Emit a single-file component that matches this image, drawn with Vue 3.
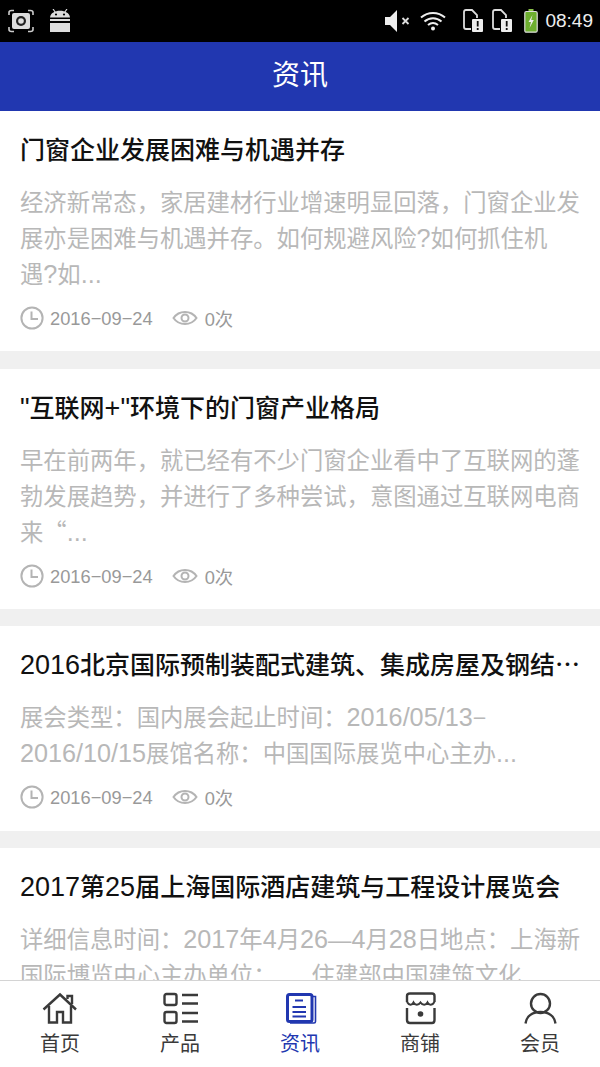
<template>
  <div class="page">
    <div class="status">
      <div class="status-left">
        <svg width="26" height="24" viewBox="0 0 26 24">
          <path d="M1 6V3.500Q1 1.500 3.500 1.500H6M20 1.500H22.500Q25 1.500 25 3.500V6M1 18V20.500Q1 22.500 3.500 22.500H6M20 22.500H22.500Q25 22.500 25 20.500V18" fill="none" stroke="#ccc" stroke-width="1.600" />
          <rect x="4" y="4" width="18" height="16" rx="2" fill="#ddd" />
          <circle cx="13" cy="12" r="5" fill="#222" />
          <circle cx="13" cy="12" r="2.800" fill="#ddd" />
        </svg>
        <svg width="20" height="24" viewBox="0 0 20 24">
          <path d="M0 8.500C.5 4 5 1.800 10 1.800S19.500 4 20 8.500Z" fill="#ddd" />
          <path d="M3 0L5.500 3.500M17 0L14.500 3.500" stroke="#ddd" stroke-width="1.200" />
          <circle cx="6" cy="5.500" r="1.100" fill="#000" />
          <circle cx="14" cy="5.500" r="1.100" fill="#000" />
          <rect x="0" y="10" width="20" height="2" fill="#ddd" />
          <rect x="0" y="14" width="20" height="9" fill="#ddd" />
        </svg>
      </div>
      <div class="status-right">
        <svg class="ic-sound" width="26" height="24" viewBox="0 0 26 24">
          <path d="M1 8H6L13 1V23L6 16H1Z" fill="#eee" />
          <path d="M18.500 9L24.500 15M24.500 9L18.500 15" stroke="#ddd" stroke-width="1.800" />
        </svg>
        <svg class="ic-wifi" width="26" height="20" viewBox="0 0 26 20">
          <path d="M1 6.500C8 .5 18 .5 25 6.500M4.500 10.500C9.500 6 16.500 6 21.500 10.500M8 14C11 11.500 15 11.500 18 14" fill="none" stroke="#eee" stroke-width="2" />
          <circle cx="13" cy="17.500" r="2" fill="#eee" />
        </svg>
        <svg v-for="n in 2" :key="n" class="ic-sim" width="20" height="24" viewBox="0 0 20 24">
          <path d="M8 20H3Q1 20 1 18V3Q1 1 3 1H9L14 6V9" fill="none" stroke="#ddd" stroke-width="1.800" />
          <rect x="9" y="10" width="11" height="13" rx="1" fill="#eee" />
          <rect x="13.800" y="12" width="1.800" height="5.500" fill="#111" />
          <rect x="13.800" y="19" width="1.800" height="2" fill="#111" />
        </svg>
        <svg class="ic-batt" width="14" height="24" viewBox="0 0 14 24">
          <rect x="4.500" y="0" width="5" height="3" fill="#8bc34a" />
          <rect x=".8" y="2.500" width="12.400" height="20.700" rx="1.500" fill="#6dae2f" stroke="#ddd" stroke-width="1.200" />
          <path d="M8.500 6L4.500 13H7L5.500 19L9.800 11H7.200Z" fill="#eee" />
        </svg>
        <span class="clock">08:49</span>
      </div>
    </div>

    <header class="topbar">资讯</header>

    <main class="list">
      <article v-for="item in news" :key="item.title" class="card">
        <h2 class="card-title" v-html="fmt(item.title)"></h2>
        <p class="card-desc" v-html="fmt(item.desc)"></p>
        <div class="meta">
          <svg class="ic-clock" width="24" height="24" viewBox="0 0 24 24">
            <circle cx="12" cy="12" r="10.600" fill="none" stroke="#b4b4b4" stroke-width="2" />
            <path d="M11.500 5.500V13H18" fill="none" stroke="#b4b4b4" stroke-width="2" />
          </svg>
          <span class="date">2016−09−24</span>
          <svg class="ic-eye" width="26" height="18" viewBox="0 0 26 18">
            <path d="M1.500 9C7 1 19 1 24.500 9C19 17 7 17 1.500 9Z" fill="none" stroke="#b4b4b4" stroke-width="2" />
            <circle cx="13" cy="9" r="3.500" fill="none" stroke="#b4b4b4" stroke-width="2" />
          </svg>
          <span>0次</span>
        </div>
      </article>
    </main>

    <nav class="tabs">
      <a v-for="tab in tabs" :key="tab.label" class="tab" :class="{ active: tab.active }">
        <svg width="36" height="36" viewBox="0 0 36 36" fill="none" stroke="currentColor" stroke-width="2.400" v-html="tab.icon"></svg>
        <span>{{ tab.label }}</span>
      </a>
    </nav>
  </div>
</template>

<script setup>
const news = [
  {
    title: '门窗企业发展困难与机遇并存',
    desc: '经济新常态，家居建材行业增速明显回落，门窗企业发展亦是困难与机遇并存。如何规避风险?如何抓住机遇?如...',
  },
  {
    title: '"互联网+"环境下的门窗产业格局',
    desc: '早在前两年，就已经有不少门窗企业看中了互联网的蓬勃发展趋势，并进行了多种尝试，意图通过互联网电商来“...',
  },
  {
    title: '2016北京国际预制装配式建筑、集成房屋及钢结⋯',
    desc: '展会类型：国内展会起止时间：2016/05/13−<br>2016/10/15展馆名称：中国国际展览中心主办...',
  },
  {
    title: '2017第25届上海国际酒店建筑与工程设计展览会',
    desc: '详细信息时间：2017年4月26—4月28日地点：上海新国际博览中心主办单位：　　住建部中国建筑文化...',
  },
]

// latin runs are a bit larger than the CJK text around them, the opening quote sits in a full-width box
const fmt = (s) =>
  s
    .replace(/[\d/.?"+]+/g, (m) => `<span class="la">${m}</span>`)
    .replace('“', '<span class="q">“</span>')

const tabs = [
  {
    label: '首页',
    icon: '<path d="M1.500 19.500L18 4.500L34 19.500"/><path d="M25.500 9V6H30V14"/><path d="M7 16V32.500H15V22H21V32.500H29V16"/>',
  },
  {
    label: '产品',
    icon: '<rect x="2.500" y="4" width="12" height="11" rx="2"/><rect x="2.500" y="22" width="12" height="11" rx="2"/><path d="M20 5H36M20 13.500H36M20 23H36M20 31.500H36"/>',
  },
  {
    label: '资讯',
    active: true,
    icon: '<path d="M31 6.500H33.500V31.500Q33.500 33 32 33H8" stroke-width="1.600"/><rect x="5.500" y="4.500" width="24.500" height="27" rx="2" stroke-width="3"/><path d="M13 10.500H21M10.500 17H24M10.500 22H24M10.500 26.500H24" stroke-width="2.200"/>',
  },
  {
    label: '商铺',
    icon: '<path d="M5 12V6Q5 3.500 8 3.500H30Q32.500 3.500 32.500 6V12"/><path d="M5 12C7 15.500 10 15.500 11.500 12.500C13 15.500 16.500 15.500 18.500 12.500C20.500 15.500 24 15.500 25.500 12.500C27 15.500 30.500 15.500 32.500 12" stroke-width="2"/><path d="M5 18V30Q5 33 8 33H30Q32.500 33 32.500 30V18"/><circle cx="18.500" cy="24" r="2.800" fill="currentColor" stroke="none"/>',
  },
  {
    label: '会员',
    icon: '<circle cx="18.500" cy="13.500" r="9.500"/><path d="M3.500 33.500C4.500 26 10.500 22 18.500 22S32.500 26 33.500 33.500"/>',
  },
]
</script>

<style>
html, body {
  margin: 0;
  background: #fff;
}
</style>

<style scoped>
.page {
  width: 600px;
  height: 1067px;
  display: flex;
  flex-direction: column;
  overflow: hidden;
  font-family: "Liberation Sans", "Noto Sans CJK SC", sans-serif;
  background: #fff;
}
.status {
  flex: none;
  height: 42px;
  background: #000;
  display: flex;
  justify-content: space-between;
  align-items: center;
  padding: 0 7px 0 8px;
}
.status-left {
  display: flex;
  align-items: center;
  gap: 16px;
}
.status-right {
  display: flex;
  align-items: center;
}
.ic-sound {
  margin-right: 10px;
}
.ic-wifi {
  margin-right: 17px;
}
.ic-sim {
  margin-right: 9px;
}
.ic-batt {
  margin: 0 7px 0 3px;
}
.clock {
  font-size: 19px;
  color: #eee;
}
.topbar {
  flex: none;
  height: 69px;
  background: #2137b0;
  color: #fff;
  font-size: 28px;
  line-height: 68px;
  text-align: center;
}
.list {
  flex: 1;
  min-height: 0;
  overflow: hidden;
  background: #f0f0f0;
}
.card {
  background: #fff;
  padding: 21px 20px 18.33px;
  margin-bottom: 17.33px;
}
.card-title {
  margin: 0 0 17px;
  font-size: 25px;
  font-weight: 500;
  line-height: 36px;
  color: #111;
  white-space: nowrap;
  overflow: hidden;
}
.card-title :deep(.la) {
  font-size: 1.08em;
  font-weight: 400;
  line-height: 0;
}
.card-desc {
  margin: 0 -2px 10px 0;
  font-size: 23.33px;
  line-height: 36px;
  color: #b8b8b8;
}
.card-desc :deep(.la) {
  font-size: 1.08em;
  line-height: 0;
}
.card-desc :deep(.q) {
  font-family: "Noto Sans CJK SC", sans-serif;
  line-height: 0;
}
.meta {
  display: flex;
  align-items: center;
  height: 30px;
  font-size: 18.3px;
  color: #999;
}
.ic-clock {
  margin-right: 6px;
}
.date {
  margin-right: 19px;
  padding-top: 2px;
}
.ic-eye {
  margin-right: 7px;
}
.tabs {
  flex: none;
  height: 87px;
  box-sizing: border-box;
  border-top: 1px solid #d4d4d4;
  background: #fff;
  display: flex;
}
.tab {
  flex: 1;
  display: flex;
  flex-direction: column;
  align-items: center;
  padding-top: 9px;
  color: #3a3a3a;
  font-size: 20px;
  line-height: 28px;
}
.tab svg {
  margin-bottom: 4px;
}
.tab.active {
  color: #2137b0;
}
</style>
